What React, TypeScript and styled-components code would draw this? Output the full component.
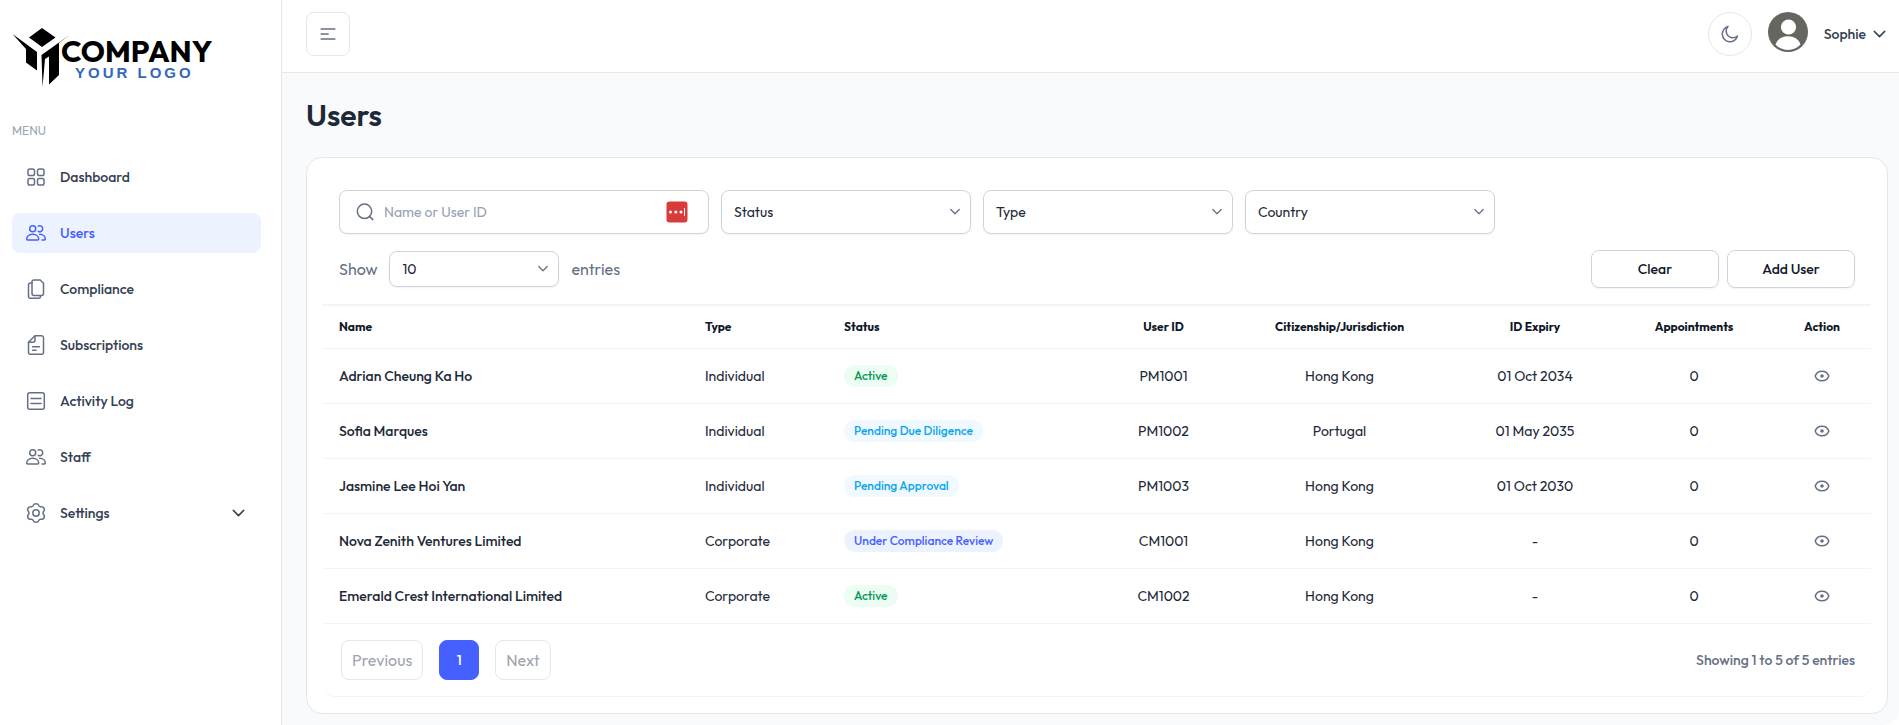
import React from "react";
import styled, { createGlobalStyle, css } from "styled-components";

const GlobalStyle = createGlobalStyle`
  *, *::before, *::after { box-sizing: border-box; }
  body {
    margin: 0;
    background: #ffffff;
    color: #1d2939;
    font-family: Outfit, Lato, "Liberation Sans", sans-serif;
    font-size: 14px;
    line-height: 20px;
  }
  button, input, select { font: inherit; color: inherit; margin: 0; }
  button { cursor: pointer; }
  svg { display: block; flex-shrink: 0; }
`;

const Shell = styled.div`
  display: flex;
  min-height: 100vh;
`;

const Sidebar = styled.aside`
  flex: 0 0 282px;
  padding: 24px 20px 24px 12px;
  border-right: 1px solid #e4e7ec;
  background: #ffffff;
`;

const LogoLink = styled.a`
  display: block;
  margin-bottom: 32px;
`;

const MenuTitle = styled.h2`
  margin: 0 0 16px;
  font-size: 12px;
  line-height: 20px;
  font-weight: 400;
  color: #98a2b3;
`;

const MenuList = styled.ul`
  display: flex;
  flex-direction: column;
  gap: 16px;
  margin: 0;
  padding: 0;
  list-style: none;
`;

const MenuLink = styled.a<{ $active?: boolean }>`
  display: flex;
  align-items: center;
  gap: 12px;
  height: 40px;
  padding: 0 12px;
  border-radius: 8px;
  font-weight: 500;
  text-decoration: none;
  color: ${(p) => (p.$active ? "#465fff" : "#344054")};
  background: ${(p) => (p.$active ? "#ecf3ff" : "transparent")};

  > svg:first-child { color: ${(p) => (p.$active ? "#465fff" : "#667085")}; }
  > svg:last-child:not(:first-child) { margin-left: auto; }
`;

const Main = styled.div`
  flex: 1;
  min-width: 0;
  background: #f9fafb;
  border-bottom-right-radius: 16px;
`;

const Header = styled.header`
  display: flex;
  justify-content: space-between;
  align-items: flex-start;
  padding: 12px 9px 16px 24px;
  border-bottom: 1px solid #e4e7ec;
  background: #ffffff;
`;

const HeaderGroup = styled.div`
  display: flex;
  align-items: flex-start;
  gap: 16px;
`;

const IconButton = styled.button<{ $round?: boolean }>`
  display: flex;
  align-items: center;
  justify-content: center;
  width: 44px;
  height: 44px;
  padding: 0;
  border: 1px solid #e4e7ec;
  border-radius: ${(p) => (p.$round ? "50%" : "8px")};
  background: #ffffff;
  color: #667085;
`;

const UserButton = styled.button`
  display: flex;
  align-items: center;
  gap: 4px;
  height: 44px;
  padding: 0;
  border: 0;
  background: none;
  font-weight: 500;
  color: #344054;
`;

const Content = styled.main`
  padding: 24px 11px 11px 24px;
`;

const PageTitle = styled.h1`
  margin: 0 0 24px;
  font-size: 30px;
  line-height: 36px;
  font-weight: 600;
  color: #1d2939;
`;

const Card = styled.section`
  padding: 16px;
  border: 1px solid #e4e7ec;
  border-radius: 16px;
  background: #ffffff;
`;

const Toolbar = styled.div`
  display: flex;
  flex-direction: column;
  gap: 16px;
  padding: 16px 16px;
`;

const FilterRow = styled.form`
  display: flex;
  flex-wrap: wrap;
  gap: 12px;
`;

const fieldBox = css`
  border: 1px solid #d0d5dd;
  border-radius: 8px;
  background: #ffffff;
  box-shadow: 0 1px 2px rgba(16, 24, 40, 0.05);
`;

const SearchBox = styled.label`
  ${fieldBox}
  display: flex;
  align-items: center;
  gap: 8px;
  width: 370px;
  height: 44px;
  padding: 0 20px 0 16px;
  color: #667085;
`;

const SearchInput = styled.input`
  flex: 1;
  min-width: 0;
  padding: 0;
  border: 0;
  outline: 0;
  background: none;
  color: #1d2939;
  &::placeholder { color: #98a2b3; opacity: 1; }
`;

const SelectBox = styled.span<{ $width: number; $height: number }>`
  position: relative;
  display: block;
  width: ${(p) => p.$width}px;
  height: ${(p) => p.$height}px;
  color: #667085;

  > svg {
    position: absolute;
    top: 50%;
    right: 11px;
    margin-top: -5px;
    pointer-events: none;
  }
`;

const SelectControl = styled.select`
  ${fieldBox}
  appearance: none;
  width: 100%;
  height: 100%;
  padding: 0 32px 0 12px;
  color: #1d2939;
`;

const EntriesRow = styled.div`
  display: flex;
  align-items: center;
  justify-content: space-between;
`;

const EntriesLabel = styled.label`
  display: flex;
  align-items: center;
  gap: 12px;
  font-size: 16px;
  color: #667085;
  select { font-size: 14px; }
`;

const ButtonGroup = styled.div`
  display: flex;
  gap: 8px;
`;

const ActionButton = styled.button`
  ${fieldBox}
  width: 128px;
  height: 38px;
  padding: 0;
  font-weight: 500;
  color: #101828;
`;

const Table = styled.table`
  width: 100%;
  table-layout: fixed;
  border-collapse: separate;
  border-spacing: 0;
  border-top: 2px solid #f2f4f7;
`;

const HeadCell = styled.th<{ $center?: boolean }>`
  height: 43px;
  padding: 0 16px;
  border-bottom: 1px solid #f2f4f7;
  font-size: 12px;
  font-weight: 700;
  white-space: nowrap;
  color: #101828;
  text-align: ${(p) => (p.$center ? "center" : "left")};
`;

const Cell = styled.td<{ $center?: boolean; $strong?: boolean }>`
  height: 55px;
  padding: 0 16px;
  border-bottom: 1px solid #f2f4f7;
  white-space: nowrap;
  font-weight: ${(p) => (p.$strong ? 500 : 400)};
  color: #1d2939;
  text-align: ${(p) => (p.$center ? "center" : "left")};
`;

const tones = {
  green: css`background: #ecfdf3; color: #039855;`,
  sky: css`background: #f0f9ff; color: #0ba5ec;`,
  blue: css`background: #ecf3ff; color: #465fff;`,
};

const Badge = styled.span<{ $tone: keyof typeof tones }>`
  display: inline-block;
  padding: 1px 10px;
  border-radius: 11px;
  font-size: 12px;
  font-weight: 500;
  vertical-align: middle;
  ${(p) => tones[p.$tone]}
`;

const ViewButton = styled.button`
  display: flex;
  margin: 0 auto;
  padding: 0;
  border: 0;
  background: none;
  color: #667085;
`;

const TableFooter = styled.div`
  display: flex;
  align-items: center;
  justify-content: space-between;
  padding: 16px 16px 16px 18px;
  border-bottom: 1px solid #f2f4f7;
  border-radius: 0 0 12px 12px;
`;

const Pager = styled.nav`
  display: flex;
  gap: 16px;
`;

const PageButton = styled.button<{ $current?: boolean }>`
  min-width: 40px;
  height: 40px;
  padding: 0 10px;
  border: 1px solid ${(p) => (p.$current ? "#465fff" : "#e4e7ec")};
  border-radius: 8px;
  font-size: ${(p) => (p.$current ? 14 : 16)}px;
  font-weight: ${(p) => (p.$current ? 500 : 400)};
  background: ${(p) => (p.$current ? "#465fff" : "#ffffff")};
  color: ${(p) => (p.$current ? "#ffffff" : "#a0a5b0")};
`;

const Summary = styled.p`
  margin: 0;
  font-weight: 500;
  color: #667085;
`;

type IconProps = { size?: number; box?: number; width?: number; children: React.ReactNode };

const Icon = ({ size = 24, box = 24, width = 1.5, children }: IconProps) => (
  <svg
    width={size}
    height={size}
    viewBox={`0 0 ${box} ${box}`}
    fill="none"
    stroke="currentColor"
    strokeWidth={width}
    strokeLinecap="round"
    strokeLinejoin="round"
    aria-hidden="true"
  >
    {children}
  </svg>
);

const GridIcon = () => (
  <Icon>
    <rect x="4" y="4" width="6.5" height="6.5" rx="1.8" />
    <rect x="13.5" y="4" width="6.5" height="6.5" rx="1.8" />
    <rect x="4" y="13.5" width="6.5" height="6.5" rx="1.8" />
    <rect x="13.5" y="13.5" width="6.5" height="6.5" rx="1.8" />
  </Icon>
);

const PeopleIcon = () => (
  <Icon>
    <circle cx="8.7" cy="7.7" r="3" />
    <path d="M8.7 13.3c-3.9 0-6 2.2-6 4.7 0 .7.4 1 1 1h10c.6 0 1-.3 1-1 0-2.5-2.1-4.7-6-4.7z" />
    <path d="M14.2 5.1a3 3 0 1 1 0 5.2" />
    <path d="M15.6 13.3c3.6 0 5.7 2.2 5.7 4.7 0 .7-.4 1-1 1h-2.3" />
  </Icon>
);

const CopyIcon = () => (
  <Icon>
    <path d="M10 3h6.2L19.5 6.3V16.5a2 2 0 0 1-2 2H10a2 2 0 0 1-2-2V5a2 2 0 0 1 2-2z" />
    <path d="M8 6H6.5a2 2 0 0 0-2 2V19.3a2 2 0 0 0 2 2H14.5a2 2 0 0 0 2-2V18.7" />
  </Icon>
);

const DocumentIcon = () => (
  <Icon>
    <path d="M11 2.7H17.5a2 2 0 0 1 2 2V19.3a2 2 0 0 1-2 2H6.5a2 2 0 0 1-2-2V9.2z" />
    <path d="M11 2.7V7.2a2 2 0 0 1-2 2H4.5" />
    <path d="M8.5 13.8H15.5M8.5 17.3H12" />
  </Icon>
);

const ListIcon = () => (
  <Icon>
    <rect x="3.7" y="3.7" width="16.6" height="16.6" rx="2" />
    <path d="M7 9.5H17M7 14.5H17" />
  </Icon>
);

const GearIcon = () => (
  <Icon>
    <circle cx="12" cy="12" r="3.2" />
    <path d="M9.2 4.5C9.6 3.3 10.7 2.7 12 2.7S14.4 3.3 14.8 4.5C15.2 5.5 15.9 5.9 16.9 5.7C18.2 5.5 19.3 6 19.9 7C20.6 8.2 20.5 9.3 19.7 10.3C18.9 11.3 18.9 12.7 19.7 13.7C20.5 14.7 20.6 15.8 19.9 17C19.3 18 18.2 18.5 16.9 18.3C15.9 18.1 15.2 18.5 14.8 19.5C14.4 20.7 13.3 21.3 12 21.3S9.6 20.7 9.2 19.5C8.8 18.5 8.1 18.1 7.1 18.3C5.8 18.5 4.7 18 4.1 17C3.4 15.8 3.5 14.7 4.3 13.7C5.1 12.7 5.1 11.3 4.3 10.3C3.5 9.3 3.4 8.2 4.1 7C4.7 6 5.8 5.5 7.1 5.7C8.1 5.9 8.8 5.5 9.2 4.5Z" />
  </Icon>
);

const ChevronIcon = ({ size = 20 }: { size?: number }) => (
  <Icon size={size} box={20}>
    <path d="M4.3 7.4L9.5 12.6L14.7 7.4" />
  </Icon>
);

const SelectArrow = () => (
  <Icon size={10} box={10} width={1.3}>
    <path d="M0.8 2.5L5 6.7L9.2 2.5" />
  </Icon>
);

const MenuIcon = () => (
  <svg width="16" height="12" viewBox="0 0 16 12" fill="none" stroke="currentColor" strokeWidth="1.7" strokeLinecap="round" aria-hidden="true">
    <path d="M1.3 1H14.7M1.3 6H8M1.3 11H14.7" />
  </svg>
);

const MoonIcon = () => (
  <Icon size={20} box={20}>
    <path d="M17.455 11.97A7.71 7.71 0 1 1 8.031 2.546A6.668 6.668 0 0 0 12.915 13.753A6.64 6.64 0 0 0 17.455 11.97Z" />
  </Icon>
);

const SearchIcon = () => (
  <Icon size={20} box={20}>
    <circle cx="8.5" cy="9.3" r="7.2" />
    <path d="M13.7 14.6L16.8 17.6" />
  </Icon>
);

const EyeIcon = () => (
  <Icon size={20} box={20}>
    <path d="M3.2 10C4.2 7.1 6.8 5.2 10 5.2S15.8 7.1 16.8 10C15.8 12.9 13.2 14.8 10 14.8S4.2 12.9 3.2 10Z" />
    <circle cx="10" cy="10" r="1.8" fill="currentColor" stroke="none" />
  </Icon>
);

const PasswordBadge = () => (
  <svg width="22" height="22" viewBox="0 0 22 22" aria-hidden="true">
    <rect x="0.5" y="0.5" width="21" height="21" rx="3" fill="#d93b3b" />
    <g fill="#ffffff">
      <circle cx="4.5" cy="11" r="1.5" />
      <circle cx="9.8" cy="11" r="1.5" />
      <circle cx="15" cy="11" r="1.5" />
      <rect x="18" y="7" width="1" height="8" />
    </g>
  </svg>
);

const Avatar = () => (
  <svg width="40" height="40" viewBox="0 0 40 40" role="img" aria-label="Sophie">
    <circle cx="20" cy="20" r="20" fill="#666660" />
    <circle cx="20.5" cy="15" r="7.6" fill="#ffffff" />
    <path d="M7.5 32.5C9.5 27 14 24.3 20 24.3S30.5 27 32.5 32.5C29.5 35.9 25 38 20 38S10.5 35.9 7.5 32.5Z" fill="#ffffff" />
  </svg>
);

const Logo = () => (
  <svg width="204" height="65" viewBox="0 0 204 65" role="img" aria-label="Company, your logo">
    <path d="M30 4L43.5 13.5L30 23L17 13.5Z" fill="#000000" />
    <path d="M0.5 10L25 28V46.5L14 38.5V25Z" fill="#000000" />
    <path d="M59 10L47 19V51L37 60.5V32.5L33 35L30.5 63L29.5 31Z" fill="#000000" />
    <text x="49" y="38" fontFamily="Outfit, Lato, sans-serif" fontSize="30" fontWeight="700" fill="#000000">COMPANY</text>
    <text x="63" y="54" fontFamily="Liberation Sans, sans-serif" fontSize="15" fontWeight="700" letterSpacing="3" fill="#3468b8">YOUR LOGO</text>
  </svg>
);

const menu = [
  { label: "Dashboard", icon: <GridIcon /> },
  { label: "Users", icon: <PeopleIcon />, active: true },
  { label: "Compliance", icon: <CopyIcon /> },
  { label: "Subscriptions", icon: <DocumentIcon /> },
  { label: "Activity Log", icon: <ListIcon /> },
  { label: "Staff", icon: <PeopleIcon /> },
  { label: "Settings", icon: <GearIcon />, expandable: true },
];

const columns = [
  { label: "Name", width: 366 },
  { label: "Type", width: 139 },
  { label: "Status", width: 275 },
  { label: "User ID", width: 121, center: true },
  { label: "Citizenship/Jurisdiction", width: 231, center: true },
  { label: "ID Expiry", width: 160, center: true },
  { label: "Appointments", width: 158, center: true },
  { label: "Action", width: 98, center: true },
];

type User = {
  name: string;
  type: string;
  status: string;
  tone: keyof typeof tones;
  id: string;
  country: string;
  expiry: string;
  appointments: number;
};

const users: User[] = [
  { name: "Adrian Cheung Ka Ho", type: "Individual", status: "Active", tone: "green", id: "PM1001", country: "Hong Kong", expiry: "01 Oct 2034", appointments: 0 },
  { name: "Sofia Marques", type: "Individual", status: "Pending Due Diligence", tone: "sky", id: "PM1002", country: "Portugal", expiry: "01 May 2035", appointments: 0 },
  { name: "Jasmine Lee Hoi Yan", type: "Individual", status: "Pending Approval", tone: "sky", id: "PM1003", country: "Hong Kong", expiry: "01 Oct 2030", appointments: 0 },
  { name: "Nova Zenith Ventures Limited", type: "Corporate", status: "Under Compliance Review", tone: "blue", id: "CM1001", country: "Hong Kong", expiry: "-", appointments: 0 },
  { name: "Emerald Crest International Limited", type: "Corporate", status: "Active", tone: "green", id: "CM1002", country: "Hong Kong", expiry: "-", appointments: 0 },
];

const Col = styled.col<{ $width: number }>`
  width: ${(p) => p.$width}px;
`;

const Select = ({ label, width = 250, height = 44 }: { label: string; width?: number; height?: number }) => (
  <SelectBox $width={width} $height={height}>
    <SelectControl aria-label={label} defaultValue={label}>
      <option>{label}</option>
    </SelectControl>
    <SelectArrow />
  </SelectBox>
);

export default function App() {
  return (
    <>
      <GlobalStyle />
      <Shell>
        <Sidebar>
          <LogoLink href="#"><Logo /></LogoLink>
          <MenuTitle>MENU</MenuTitle>
          <MenuList>
            {menu.map((item) => (
              <li key={item.label}>
                <MenuLink href="#" $active={item.active}>
                  {item.icon}
                  {item.label}
                  {item.expandable && <ChevronIcon />}
                </MenuLink>
              </li>
            ))}
          </MenuList>
        </Sidebar>
        <Main>
          <Header>
            <IconButton aria-label="Toggle sidebar"><MenuIcon /></IconButton>
            <HeaderGroup>
              <IconButton $round aria-label="Toggle dark mode"><MoonIcon /></IconButton>
              <Avatar />
              <UserButton>
                Sophie
                <ChevronIcon />
              </UserButton>
            </HeaderGroup>
          </Header>
          <Content>
            <PageTitle>Users</PageTitle>
            <Card>
              <Toolbar>
                <FilterRow>
                  <SearchBox>
                    <SearchIcon />
                    <SearchInput type="text" placeholder="Name or User ID" aria-label="Name or User ID" />
                    <PasswordBadge />
                  </SearchBox>
                  <Select label="Status" />
                  <Select label="Type" />
                  <Select label="Country" />
                </FilterRow>
                <EntriesRow>
                  <EntriesLabel>
                    Show
                    <Select label="10" width={170} height={36} />
                    entries
                  </EntriesLabel>
                  <ButtonGroup>
                    <ActionButton>Clear</ActionButton>
                    <ActionButton>Add User</ActionButton>
                  </ButtonGroup>
                </EntriesRow>
              </Toolbar>
              <Table>
                <colgroup>
                  {columns.map((c) => <Col key={c.label} $width={c.width} />)}
                </colgroup>
                <thead>
                  <tr>
                    {columns.map((c) => (
                      <HeadCell key={c.label} scope="col" $center={c.center}>{c.label}</HeadCell>
                    ))}
                  </tr>
                </thead>
                <tbody>
                  {users.map((u) => (
                    <tr key={u.id}>
                      <Cell $strong>{u.name}</Cell>
                      <Cell>{u.type}</Cell>
                      <Cell><Badge $tone={u.tone}>{u.status}</Badge></Cell>
                      <Cell $center>{u.id}</Cell>
                      <Cell $center>{u.country}</Cell>
                      <Cell $center>{u.expiry}</Cell>
                      <Cell $center>{u.appointments}</Cell>
                      <Cell $center>
                        <ViewButton aria-label={`View ${u.name}`}><EyeIcon /></ViewButton>
                      </Cell>
                    </tr>
                  ))}
                </tbody>
              </Table>
              <TableFooter>
                <Pager aria-label="Pagination">
                  <PageButton disabled>Previous</PageButton>
                  <PageButton $current aria-current="page">1</PageButton>
                  <PageButton disabled>Next</PageButton>
                </Pager>
                <Summary>Showing 1 to 5 of 5 entries</Summary>
              </TableFooter>
            </Card>
          </Content>
        </Main>
      </Shell>
    </>
  );
}
